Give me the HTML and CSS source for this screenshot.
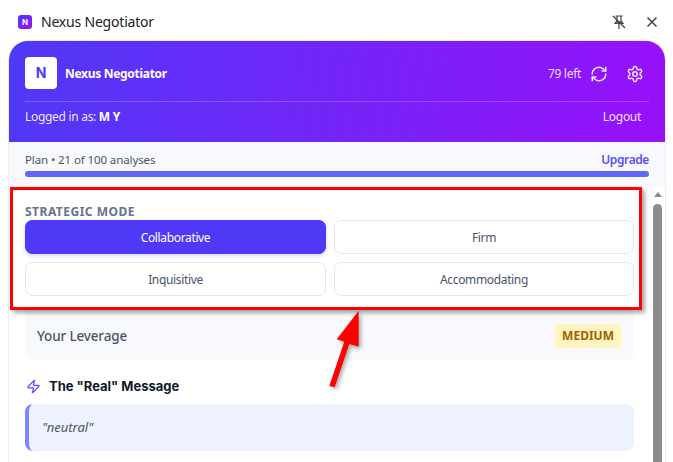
FILE: index.html
```html
<!DOCTYPE html>
<html lang="en">
<head>
<meta charset="utf-8">
<title>Nexus Negotiator</title>
<link rel="stylesheet" href="styles.css">
</head>
<body>
<div class="titlebar">
  <div class="app-title">
    <span class="app-icon">N</span>
    <span class="app-name">Nexus Negotiator</span>
  </div>
  <div class="window-actions">
    <svg class="win-icon pin" viewBox="0 0 16 16"><path d="M4.500 2h7M6 2.500v4.200L4 9.500h8L10 6.700V2.500M8 9.800V15"/><path class="pin-fill" d="M6.500 7h3l1.500 2.500H5z"/><path d="M2 2l12 12"/></svg>
    <svg class="win-icon" viewBox="0 0 16 16"><path d="M3.500 3.500l9 9M12.500 3.500l-9 9"/></svg>
  </div>
</div>
<main class="panel">
  <header class="hero">
    <div class="hero-top">
      <div class="brand">
        <span class="logo">N</span>
        <span class="brand-name">Nexus Negotiator</span>
      </div>
      <div class="hero-actions">
        <span class="left-count">79 left</span>
        <svg class="hero-icon" viewBox="0 0 24 24"><path d="M3 12a9 9 0 0 1 15-6.700L21 8"/><path d="M21 3v5h-5"/><path d="M21 12a9 9 0 0 1-15 6.700L3 16"/><path d="M8 16H3v5"/></svg>
        <svg class="hero-icon gear" viewBox="0 0 24 24"><path d="M12.200 2h-.4a2 2 0 0 0-2 2v.2a2 2 0 0 1-1 1.700l-.4.3a2 2 0 0 1-2 0l-.2-.1a2 2 0 0 0-2.700.7l-.2.4a2 2 0 0 0 .7 2.700l.2.1a2 2 0 0 1 1 1.700v.5a2 2 0 0 1-1 1.800l-.2.1a2 2 0 0 0-.7 2.700l.2.4a2 2 0 0 0 2.700.7l.2-.1a2 2 0 0 1 2 0l.4.3a2 2 0 0 1 1 1.700v.2a2 2 0 0 0 2 2h.4a2 2 0 0 0 2-2v-.2a2 2 0 0 1 1-1.700l.4-.3a2 2 0 0 1 2 0l.2.1a2 2 0 0 0 2.700-.7l.2-.4a2 2 0 0 0-.7-2.700l-.2-.1a2 2 0 0 1-1-1.800v-.5a2 2 0 0 1 1-1.700l.2-.1a2 2 0 0 0 .7-2.700l-.2-.4a2 2 0 0 0-2.700-.7l-.2.1a2 2 0 0 1-2 0l-.4-.3a2 2 0 0 1-1-1.700V4a2 2 0 0 0-2-2z"/><circle cx="12" cy="12" r="3"/></svg>
      </div>
    </div>
    <div class="hero-bottom">
      <span class="login">Logged in as: <b>M Y</b></span>
      <span class="logout">Logout</span>
    </div>
  </header>
  <section class="usage">
    <div class="usage-row">
      <span class="usage-text">Plan • 21 of 100 analyses</span>
      <span class="upgrade">Upgrade</span>
    </div>
    <div class="usage-bar"></div>
  </section>
  <div class="scroll-area">
    <div class="content">
      <h2 class="mode-title">STRATEGIC MODE</h2>
      <div class="mode-grid">
        <button class="mode active">Collaborative</button>
        <button class="mode">Firm</button>
        <button class="mode">Inquisitive</button>
        <button class="mode">Accommodating</button>
      </div>
      <div class="leverage">
        <span class="leverage-label">Your Leverage</span>
        <span class="badge">MEDIUM</span>
      </div>
      <div class="real-head">
        <svg class="bolt" viewBox="0 0 24 24"><path d="M4 14a1 1 0 0 1-.8-1.600l9.900-10.200c.3-.3.8 0 .7.4l-1.900 6.100a1 1 0 0 0 1 1.300h7a1 1 0 0 1 .8 1.600l-9.900 10.200c-.3.3-.8 0-.7-.4l1.900-6.100a1 1 0 0 0-1-1.300z"/></svg>
        <h3 class="real-title">The "Real" Message</h3>
      </div>
      <blockquote class="quote">"neutral"</blockquote>
    </div>
    <div class="scrollbar">
      <span class="arrow"></span>
      <span class="thumb"></span>
    </div>
  </div>
</main>
<div class="highlight"></div>
<svg class="pointer" viewBox="0 0 50 90"><path d="M38.700 5.700 L38.700 41.700 L29.300 39 L14.700 82.300 L9.300 81 L24.300 36.700 L16.700 34.300 Z"/></svg>
</body>
</html>
```
FILE: styles.css
```css
* { box-sizing: border-box; }
html, body { margin: 0; height: 100%; }
body {
  width: 673px;
  height: 462px;
  overflow: hidden;
  background: #fff;
  font-family: "Noto Sans", sans-serif;
  position: relative;
  display: flex;
  flex-direction: column;
}
.titlebar {
  height: 40px;
  flex: none;
  display: flex;
  align-items: center;
  justify-content: space-between;
  padding: 3px 13px 0 18px;
}
.app-title { display: flex; align-items: center; gap: 9px; }
.app-icon {
  width: 14px; height: 14px; border-radius: 3px;
  background: linear-gradient(135deg, #4f39f6, #9810fa);
  color: #fff; font: 700 8px/14px "Inter", sans-serif; text-align: center;
}
.app-name { font: 400 14px/20px "Noto Sans", sans-serif; color: #222; letter-spacing: -.2px; }
.window-actions { display: flex; gap: 16px; }
.win-icon { width: 16px; height: 16px; fill: none; stroke: #444; stroke-width: 1.500; }
.pin { margin-right: 1px; stroke-width: 1.200; }
.pin-fill { fill: #555; stroke: none; }
.panel {
  margin-left: 8px;
  width: 658px;
  flex: 1;
  min-height: 0;
  border: 1px solid #eceef4;
  border-bottom: 0;
  border-radius: 20px 20px 0 0;
  display: flex;
  flex-direction: column;
  overflow: hidden;
  background: #fff;
}
.hero {
  height: 101px;
  flex: none;
  background: linear-gradient(100deg, #4f39f6, #9810fa);
  padding: 16px 16px 0;
  color: #fff;
}
.hero-top {
  height: 45px;
  display: flex; align-items: flex-start; justify-content: space-between;
  border-bottom: 1px solid rgba(255,255,255,.2);
}
.brand { display: flex; align-items: center; gap: 8px; }
.logo {
  width: 32px; height: 32px; border-radius: 4px; background: #fff;
  color: #4f39f6; text-align: center;
  font: 700 14px/32px "Inter", sans-serif;
}
.brand-name { font: 700 12px/16px "Noto Sans", sans-serif; padding-top: 1px; letter-spacing: -.3px; }
.hero-actions { display: flex; align-items: center; gap: 9px; height: 32px; padding-right: 5px; padding-top: 1px; }
.left-count { font: 400 12px/16px "Noto Sans", sans-serif; color: rgba(255,255,255,.85); letter-spacing: -.3px; }
.hero-icon { width: 18px; height: 18px; fill: none; stroke: #f0e4ff; stroke-width: 2; stroke-linecap: round; stroke-linejoin: round; }
.gear { margin-left: 9px; }
.hero-bottom {
  display: flex; justify-content: space-between; align-items: center;
  padding: 7px 8px 0 0;
  font: 400 12px/16px "Noto Sans", sans-serif;
  color: rgba(255,255,255,.9);
  letter-spacing: -.3px;
}
.login b { font-weight: 700; color: #fff; }
.usage {
  height: 45px;
  flex: none;
  padding: 9px 16px 0;
  background: #f8f9fc;
}
.usage-row { display: flex; justify-content: space-between; align-items: center; height: 18px; }
.usage-text { font: 400 11.500px/16px "Noto Sans", sans-serif; color: #4a5565; letter-spacing: -.1px; }
.upgrade { font: 600 12px/16px "Noto Sans", sans-serif; color: #5b50f5; letter-spacing: -.4px; }
.usage-bar { height: 6px; margin-top: 2px; border-radius: 3px; background: #6366f8; }
.scroll-area { flex: 1; min-height: 0; display: flex; overflow: hidden; }
.content { width: 641px; padding: 17px 0 0 16px; }
.mode-title {
  margin: 0; font: 700 12px/16px "Noto Sans", sans-serif;
  letter-spacing: .5px; color: #62748e;
}
.mode-grid { display: grid; grid-template-columns: 301px 300px; column-gap: 8px; row-gap: 8px; }
.mode {
  height: 34px;
  border: 1px solid #e5e7eb;
  border-radius: 7px;
  background: #fff;
  font: 400 12px/16px "Noto Sans", sans-serif;
  letter-spacing: -.35px;
  color: #4a5565;
  padding: 2px 0 0;
}
.mode.active {
  background: #4f39f6;
  border-color: #4f39f6;
  color: #fff;
  box-shadow: 0 2px 4px rgba(79,57,246,.2);
}
.leverage {
  margin-top: 14px;
  width: 609px;
  height: 50px;
  border-radius: 8px;
  background: #f8f9fc;
  padding: 1px 12px 0;
  display: flex; align-items: center; justify-content: space-between;
}
.leverage-label { font: 500 13.500px/18px "Noto Sans", sans-serif; color: #4a5565; letter-spacing: -.15px; }
.badge {
  background: #fef5c3; color: #a65f00;
  font: 700 12px/24px "Noto Sans", sans-serif;
  height: 24px; padding: 0 8px; border-radius: 4px;
}
.real-head { display: flex; align-items: center; gap: 8px; margin-top: 17px; height: 18px; }
.bolt { width: 15px; height: 15px; fill: none; stroke: #5b50f5; stroke-width: 2; stroke-linejoin: round; margin-left: 1px; }
.real-title { margin: 0; font: 700 13px/18px "Inter", sans-serif; color: #101828; }
.quote {
  margin: 9px 0 0;
  width: 609px;
  height: 47px;
  border-left: 4px solid #7c86ff;
  border-radius: 8px;
  background: #eef2ff;
  padding: 0 13px;
  font: italic 400 13px/47px "Noto Sans", sans-serif;
  color: #4a5565;
}
.scrollbar {
  width: 15px;
  display: flex; flex-direction: column; align-items: center;
  background: #fff;
}
.arrow {
  margin-top: 5px;
  width: 0; height: 0;
  border-left: 4.500px solid transparent; border-right: 4.500px solid transparent;
  border-bottom: 5px solid #888;
}
.thumb { width: 9px; flex: 1; margin-top: 7px; border-radius: 5px 5px 0 0; background: #8c8c8c; }
.highlight {
  position: absolute;
  left: 10px; top: 187px;
  width: 632px; height: 123px;
  border: 3px solid #f00;
  box-shadow: 3px 3px 4px rgba(0,0,0,.35);
}
.pointer {
  position: absolute;
  left: 320px; top: 305px;
  width: 50px; height: 90px;
  fill: #f00;
  filter: drop-shadow(2px 2px 2px rgba(0,0,0,.35));
}
```
